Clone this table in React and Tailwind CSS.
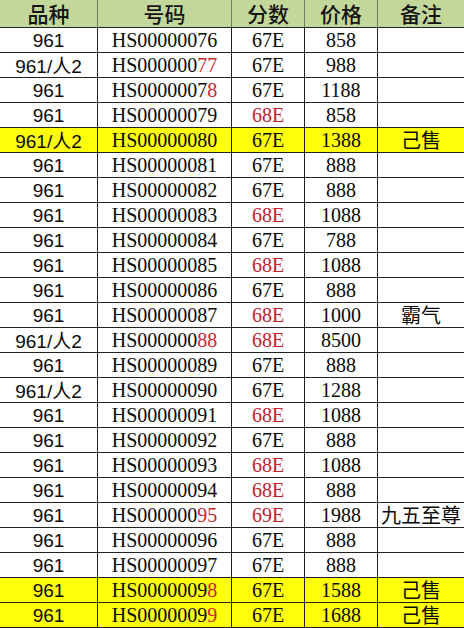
import React from "react";

const rows = [
  ["961", ["HS00000076", ""], "67E", "858", ""],
  ["961/人2", ["HS000000", "77"], "67E", "988", ""],
  ["961", ["HS0000007", "8"], "67E", "1188", ""],
  ["961", ["HS00000079", ""], "68E*", "858", ""],
  ["961/人2", ["HS00000080", ""], "67E", "1388", "己售", true],
  ["961", ["HS00000081", ""], "67E", "888", ""],
  ["961", ["HS00000082", ""], "67E", "888", ""],
  ["961", ["HS00000083", ""], "68E*", "1088", ""],
  ["961", ["HS00000084", ""], "67E", "788", ""],
  ["961", ["HS00000085", ""], "68E*", "1088", ""],
  ["961", ["HS00000086", ""], "67E", "888", ""],
  ["961", ["HS00000087", ""], "68E*", "1000", "霸气"],
  ["961/人2", ["HS000000", "88"], "68E*", "8500", ""],
  ["961", ["HS00000089", ""], "67E", "888", ""],
  ["961/人2", ["HS00000090", ""], "67E", "1288", ""],
  ["961", ["HS00000091", ""], "68E*", "1088", ""],
  ["961", ["HS00000092", ""], "67E", "888", ""],
  ["961", ["HS00000093", ""], "68E*", "1088", ""],
  ["961", ["HS00000094", ""], "68E*", "888", ""],
  ["961", ["HS000000", "95"], "69E*", "1988", "九五至尊"],
  ["961", ["HS00000096", ""], "67E", "888", ""],
  ["961", ["HS00000097", ""], "67E", "888", ""],
  ["961", ["HS0000009", "8"], "67E", "1588", "己售", true],
  ["961", ["HS0000009", "9"], "67E", "1688", "己售", true],
];

const sans = "font-['Liberation_Sans','Noto_Sans_CJK_SC',sans-serif]";
const serif = "font-['Liberation_Serif','Noto_Sans_CJK_SC',serif]";
const cjk = "font-['Noto_Sans_CJK_SC',sans-serif]";

export default function App() {
  const headers = ["品种", "号码", "分数", "价格", "备注"];
  return (
    <div className="w-[464px] h-[628px] bg-white overflow-hidden text-[#0a0a0a]">
      <div className="grid grid-cols-[98px_134px_73px_73px_86px] grid-rows-[28px] auto-rows-[25px]">
        {headers.map((h, i) => (
          <div
            key={h}
            className={`bg-[#c4d79b] border-b border-b-[#222] ${i < 4 ? "border-r border-r-[#6f7d5a]" : ""} flex items-center justify-center ${cjk} text-[21px] font-medium leading-none text-[#151515]`}
          >
            {h}
          </div>
        ))}
        {rows.map((r, idx) => {
          const bg = r[5] ? "bg-[#ffff0a]" : "bg-white";
          const cell = `${bg} border-b border-r border-[#222] flex items-center justify-center leading-none`;
          const score = r[2].replace("*", "");
          const scoreRed = r[2].includes("*");
          return (
            <React.Fragment key={idx}>
              <div className={`${cell} ${sans} text-[19px]`}>
                {r[0].includes("人") ? (
                  <span>
                    961/<span className={`${cjk} text-[19px]`}>人</span>2
                  </span>
                ) : (
                  r[0]
                )}
              </div>
              <div className={`${cell} ${serif} text-[20px]`}>
                <span>
                  {r[1][0]}
                  <span className="text-[#c8262e]">{r[1][1]}</span>
                </span>
              </div>
              <div className={`${cell} ${serif} text-[20px] ${scoreRed ? "text-[#c2222c]" : ""}`}>
                {score}
              </div>
              <div className={`${cell} ${serif} text-[20px]`}>{r[3]}</div>
              <div className={`${bg} border-b border-[#222] flex items-center justify-center leading-none ${cjk} text-[20px]`}>
                {r[4]}
              </div>
            </React.Fragment>
          );
        })}
      </div>
    </div>
  );
}
